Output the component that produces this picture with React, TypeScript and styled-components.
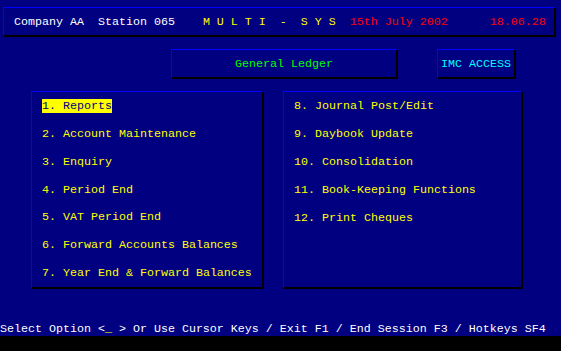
import styled, { createGlobalStyle } from "styled-components";

const GlobalStyle = createGlobalStyle`
  html, body {
    margin: 0;
    padding: 0;
    background: #000080;
    overflow: hidden;
  }
`;

const colors = {
  navy: "#000080",
  bevelLight: "#0000ff",
  bevelDark: "#000000",
  white: "#ffffff",
  yellow: "#ffff00",
  red: "#ff0000",
  green: "#00ff00",
  cyan: "#00ffff",
};

const Screen = styled.div`
  width: 561px;
  height: 351px;
  background: ${colors.navy};
  display: flex;
  flex-direction: column;
  font-family: "Liberation Mono", "DejaVu Sans Mono", monospace;
  font-size: 11.667px;
  font-weight: normal;
  white-space: pre;
  color: ${colors.white};
  -webkit-font-smoothing: none;
`;

const Frame = styled.div`
  box-sizing: border-box;
  border-top: 1px solid ${colors.bevelLight};
  border-left: 1px solid ${colors.bevelLight};
  border-right: 2px solid ${colors.bevelDark};
  border-bottom: 2px solid ${colors.bevelDark};
`;

const HeaderBar = styled(Frame)`
  margin: 7px 0 0 3px;
  width: 553px;
  height: 30px;
  padding-left: 10px;
  display: flex;
  align-items: center;
  line-height: 14px;
`;

const Ink = styled.span<{ $color: string }>`
  color: ${({ $color }) => $color};
`;

const TitleRow = styled.div`
  margin-top: 12px;
  padding-left: 171px;
  display: flex;
  gap: 39px;
`;

const TitleBox = styled(Frame)<{ $width: number; $color: string; $align: string }>`
  width: ${({ $width }) => $width}px;
  height: 30px;
  display: flex;
  align-items: center;
  justify-content: ${({ $align }) => $align};
  padding: 0 3px;
  color: ${({ $color }) => $color};
`;

const Panels = styled.div`
  margin-top: 12px;
  padding-left: 31px;
  display: flex;
  gap: 19px;
`;

const MenuPanel = styled(Frame)<{ $width: number }>`
  width: ${({ $width }) => $width}px;
  height: 198px;
  padding-left: 10px;
  display: flex;
  flex-direction: column;
`;

const MenuItem = styled.div`
  height: 28px;
  display: flex;
  align-items: center;
  color: ${colors.yellow};
`;

const Label = styled.span<{ $active?: boolean }>`
  line-height: 14px;
  background: ${({ $active }) => ($active ? colors.yellow : "transparent")};
  color: ${({ $active }) => ($active ? colors.navy : colors.yellow)};
`;

const StatusLine = styled.div`
  margin-top: auto;
  height: 14px;
  line-height: 14px;
  color: ${colors.white};
`;

const Footer = styled.div`
  height: 15px;
  background: #000000;
`;

const leftItems = [
  "1. Reports",
  "2. Account Maintenance",
  "3. Enquiry",
  "4. Period End",
  "5. VAT Period End",
  "6. Forward Accounts Balances",
  "7. Year End & Forward Balances",
];

const rightItems = [
  "8. Journal Post/Edit",
  "9. Daybook Update",
  "10. Consolidation",
  "11. Book-Keeping Functions",
  "12. Print Cheques",
];

export default function App() {
  return (
    <>
      <GlobalStyle />
      <Screen>
        <HeaderBar>
          <Ink $color={colors.white}>{"Company AA  Station 065    "}</Ink>
          <Ink $color={colors.yellow}>{"M U L T I  -  S Y S  "}</Ink>
          <Ink $color={colors.red}>{"15th July 2002      18.06.28"}</Ink>
        </HeaderBar>

        <TitleRow>
          <TitleBox $width={227} $color={colors.green} $align="center">
            General Ledger
          </TitleBox>
          <TitleBox $width={79} $color={colors.cyan} $align="flex-start">
            IMC ACCESS
          </TitleBox>
        </TitleRow>

        <Panels>
          <MenuPanel $width={233}>
            {leftItems.map((item, i) => (
              <MenuItem key={item}>
                <Label $active={i === 0}>{item}</Label>
              </MenuItem>
            ))}
          </MenuPanel>
          <MenuPanel $width={240}>
            {rightItems.map((item) => (
              <MenuItem key={item}>
                <Label>{item}</Label>
              </MenuItem>
            ))}
          </MenuPanel>
        </Panels>

        <StatusLine>
          {"Select Option <"}
          <Ink $color={colors.yellow}>_</Ink>
          {" > Or Use Cursor Keys / Exit F1 / End Session F3 / Hotkeys SF4"}
        </StatusLine>
        <Footer />
      </Screen>
    </>
  );
}
